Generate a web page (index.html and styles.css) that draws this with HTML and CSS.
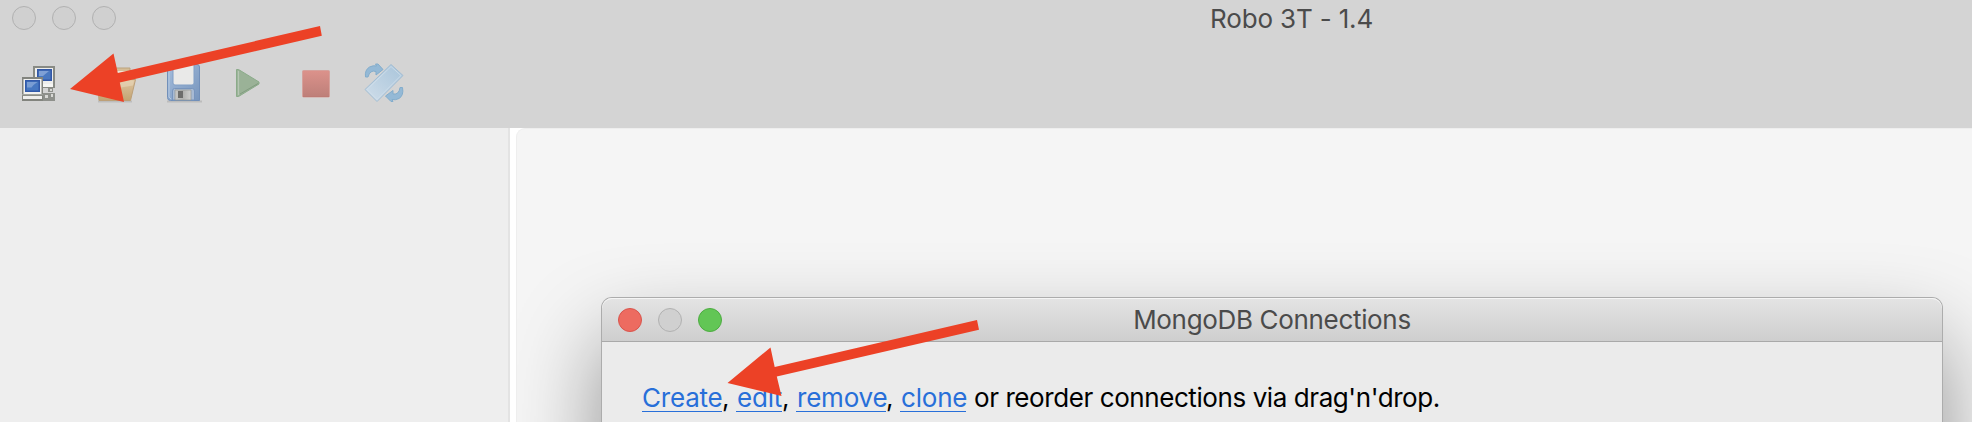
FILE: index.html
```html
<!DOCTYPE html>
<html lang="en">
<head>
<meta charset="utf-8">
<title>Robo 3T - 1.4</title>
<link rel="stylesheet" href="styles.css">
</head>
<body>
<div class="app">
  <header class="header">
    <div class="titlebar">
      <div class="lights"><i class="light"></i><i class="light"></i><i class="light"></i></div>
      <h1 class="title app-title">Robo 3T - 1.4</h1>
    </div>
    <nav class="toolbar">
      <svg class="icon connect" viewBox="18 62 40 44">
        <path d="M33 66h22v22H33z" fill="#888a84"/><path d="M35 68h18v18H35z" fill="#eeeeec"/><path d="M37 69h15v12H37z" fill="#3257a6"/><path d="M38.500 70.500h12v9h-12z" fill="#4a78c0"/><path d="M39 71h10l-6 5h-4z" fill="#7fa0d5"/>
        <path d="M43 84h10v3H43z" fill="#f6f6f4"/><path d="M48 88h5v4h-5zM43 93h12v8H43z" fill="#8e908b"/><path d="M45 95h3v3h-3zM51 94h2v3h-2zM50 89h2v2h-2z" fill="#d8d8d5"/>
        <path d="M22 77h21v24H22z" fill="#82847e"/><path d="M23.500 79h18v15h-18z" fill="#f1f1ef"/><path d="M25 80h15v12H25z" fill="#3159aa"/><path d="M26.500 81.500h12v9h-12z" fill="#4778c1"/><path d="M27 82h10.500l-4 3-2 2.500H27z" fill="#799dd3"/><path d="M23 96h19v3H23z" fill="#eeeeec"/><path d="M22 94h21v1.300H22z" fill="#a1a39e"/>
      </svg>
      <svg class="icon" viewBox="96 62 40 44">
        <defs><linearGradient id="folder" x2="0" y2="1"><stop stop-color="#dfc5a0"/><stop offset="1" stop-color="#c2a473"/></linearGradient></defs>
        <path d="M98 101.500h34" stroke="#bdbdbd" stroke-width="2"/>
        <path d="M102 68h28v10h-28z" fill="#d5bd97" stroke="#bca37c"/><path d="M104 71h25v10h-25z" fill="#eee6da"/>
        <path d="M97.500 79.500h38l-5 21H99z" fill="url(#folder)" stroke="#bda078"/><path d="M99 80.500h35l-1 5-18 3-16-1z" fill="#e8d7bb" opacity=".6"/>
      </svg>
      <svg class="icon" viewBox="164 62 40 44">
        <defs><linearGradient id="disk" x2="1" y2="1"><stop stop-color="#a4bddc"/><stop offset="1" stop-color="#7795bd"/></linearGradient><linearGradient id="metal"><stop stop-color="#c9c9c8"/><stop offset=".5" stop-color="#b2b2af"/><stop offset="1" stop-color="#d0d0ce"/></linearGradient></defs>
        <path d="M167 101.500h35" stroke="#bcbcbc" stroke-width="2"/>
        <path d="M170 64.500h27q2.500 0 2.500 2.500v33.500h-29q-3 0-3-3V67q0-2.500 2.500-2.500z" fill="url(#disk)" stroke="#718fb9"/><path d="M169 66v31l2 2" fill="none" stroke="#b7cae2"/>
        <path d="M173 64h21v19q0 2-2 2h-17q-2 0-2-2z" fill="#e9e9e8" stroke="#819fc6"/>
        <path d="M172.500 100v-9q0-2.500 2-2.500h18q2 0 2 2.500v9z" fill="#a7bad4" stroke="#7895bd"/><path d="M175 90h16v10h-16z" fill="url(#metal)" stroke="#929694" stroke-width=".7"/><path d="M178 91h5v7h-5z" fill="#6d6d6b"/>
      </svg>
      <svg class="icon" viewBox="232 62 40 44">
        <path d="M236.500 69.500h2L259 82v2l-20.500 12.500h-2z" fill="#9ab297" stroke="#8aab89" stroke-linejoin="round"/><path d="M238.500 71v24" stroke="#b6c7b4" stroke-width="1.200"/><path d="M240 94l18-10.500" stroke="#829c80"/>
      </svg>
      <svg class="icon" viewBox="300 62 40 44">
        <defs><linearGradient id="stop" x2="0" y2="1"><stop stop-color="#dc928b"/><stop offset="1" stop-color="#bd7f79"/></linearGradient></defs>
        <rect x="302.500" y="70.500" width="27" height="26.500" rx="1" fill="url(#stop)" stroke="#d5a19c"/><path d="M303 96.500h26" stroke="#bd7b75"/>
      </svg>
      <svg class="icon" viewBox="368 62 40 44">
        <defs><linearGradient id="rotate" x1="1" x2="0" y2="1"><stop stop-color="#a8c4da"/><stop offset="1" stop-color="#d0deea"/></linearGradient></defs>
        <path d="M365.500 77q-1-7 4-10 4-2 7-1l-1-2h2.500l5 5.500-7 5.500v-3.500q-6-2-8 5.500z" fill="#94b9d6" stroke="#83adcc" stroke-linejoin="round"/>
        <path d="M402.500 87.500q1.500 8-3.500 11-4 2-7 1l1 2h-2l-5.500-5.500 7.500-5.500v3.500q6 1 7-6.500z" fill="#94b9d6" stroke="#83adcc" stroke-linejoin="round"/>
        <path d="M391 64.500l12 11L377 101.500l-12-12z" fill="url(#rotate)" stroke="#a2bdd3" stroke-linejoin="round"/><path d="M391 66.500l10 9L377 99.500l-10-10z" fill="none" stroke="#d2e0eb" stroke-width=".8"/>
      </svg>
    </nav>
  </header>
  <main class="workspace">
    <aside class="sidebar"></aside>
    <section class="content">
      <div class="dialog">
        <div class="dialog-bar">
          <div class="lights"><i class="light red"></i><i class="light"></i><i class="light green"></i></div>
          <h2 class="title">MongoDB Connections</h2>
        </div>
        <p class="hint"><a class="link create">Create</a><span class="sep">,</span><a class="link edit">edit</a><span class="sep">,</span><a class="link remove">remove</a><span class="sep">,</span><a class="link clone">clone</a><span class="rest">or reorder connections via drag'n'drop.</span></p>
      </div>
    </section>
  </main>
  <svg class="arrows" viewBox="0 0 1972 422" fill="#ec4126">
    <path d="M70 89l43.500-35.500 4.300 19.500L320 26l1.800 9.700L119.800 82.500 124 102z"/>
    <path d="M727.500 383l43-35.500 4.200 19.500L977 320l2 9.700L776.800 376.500 781.500 396z"/>
  </svg>
</div>
</body>
</html>
```
FILE: styles.css
```css
* { box-sizing: border-box; }
body { margin: 0; font-family: Inter, Roboto, sans-serif; }
.app { position: relative; width: 1972px; height: 422px; overflow: hidden; display: flex; flex-direction: column; }
.header { height: 128px; background: #d4d4d4; }
.titlebar { display: flex; align-items: center; height: 36px; padding-left: 12px; }
.lights { display: flex; gap: 16px; }
.light { width: 24px; height: 24px; border: 1.5px solid #b1b1b1; border-radius: 50%; background: #d0d0d0; }
.red { background: #ed6b60; border-color: #d9544c; }
.green { background: #62c655; border-color: #4dac41; }
.title { margin: 0; font-size: 26px; line-height: 32px; font-weight: 400; color: #4b4b4b; white-space: nowrap; letter-spacing: -.33px; }
.app-title { margin-left: 1094px; padding-top: 2px; letter-spacing: -.15px; }
.toolbar { display: flex; gap: 28px; padding: 26px 0 0 18px; }
.icon { width: 40px; height: 44px; overflow: visible; }
.connect { margin-right: 10px; }
.workspace { display: flex; flex: 1; min-height: 0; background: #fff; }
.sidebar { width: 510px; background: #eee; border-right: 2px solid #e3e3e3; }
.content { flex: 1; margin-left: 6px; padding: 169px 0 0 85px; background: #f5f5f5; border: solid #eee; border-width: 1px 0 0 1px; border-radius: 9px 0 0; overflow: hidden; }
.dialog { width: 1340px; height: 700px; background: #ebebeb; border-radius: 10px; box-shadow: 0 0 0 1px #acacac, 0 42px 88px rgba(0,0,0,.42); }
.dialog-bar { display: grid; grid-template-columns: 104px 1fr 104px; align-items: center; height: 44px; padding: 0 16px; border-radius: 10px 10px 0 0; border-bottom: 1px solid #a9a9a9; background: linear-gradient(#e4e4e4, #cecece); box-shadow: inset 0 1px #f5f5f5; }
.dialog-bar .title { text-align: center; }
.hint { display: flex; margin: 0; padding: 40px 0 0 40px; font-size: 26px; line-height: 32px; white-space: nowrap; color: #000; letter-spacing: -.42px; }
.link { height: 30px; color: #286fd9; border-bottom: 1.5px solid #286fd9; letter-spacing: -.2px; }
.create { width: 80px; }
.edit { width: 46px; padding-left: 1px; }
.remove { width: 90px; padding-left: 1px; }
.clone { width: 66px; padding-left: 1px; }
.sep { width: 14px; }
.rest { margin-left: 8px; }
.arrows { position: absolute; inset: 0; width: 1972px; height: 422px; }
```
